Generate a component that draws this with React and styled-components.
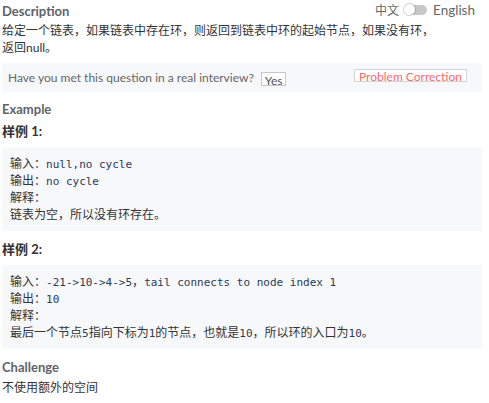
import React, { useState } from 'react';
import styled, { createGlobalStyle } from 'styled-components';

const GlobalStyle = createGlobalStyle`
  body {
    margin: 0;
    background: #fff;
    font-family: Lato, "Noto Sans CJK SC", sans-serif;
    color: #333;
  }
`;

const Page = styled.div`
  width: 480px;
  padding: 0 2px;
  display: flex;
  flex-direction: column;
`;

const HeaderRow = styled.div`
  height: 22px;
  display: flex;
  align-items: center;
  justify-content: space-between;
`;

const SectionTitle = styled.div`
  font-size: 13px;
  font-weight: 700;
  line-height: 20px;
  color: #5f6368;
  margin-top: ${props => props.gap || 0}px;
`;

const LangToggle = styled.div`
  display: flex;
  align-items: center;
  gap: 6px;
  font-size: 12px;
  color: #666;
  margin-right: 7px;
  margin-top: -3px;
`;

const Switch = styled.button`
  width: 22px;
  height: 10px;
  border: none;
  border-radius: 5px;
  background: #c8c8c8;
  padding: 0;
  position: relative;
  cursor: pointer;

  &::after {
    content: '';
    position: absolute;
    top: -1px;
    left: ${props => (props.on ? '11px' : '-1px')};
    width: 11px;
    height: 11px;
    border-radius: 50%;
    background: #fff;
    box-shadow: 0 0 1px 1px rgba(0, 0, 0, 0.2);
  }
`;

const English = styled.span`
  font-size: 13.5px;
`;

const Paragraph = styled.p`
  margin: 0;
  max-width: 440px;
  font-size: 12px;
  line-height: 17px;
  color: #333;
`;

const InterviewBar = styled.div`
  margin-top: 7px;
  height: 29px;
  background: #f7f8fa;
  display: flex;
  align-items: center;
  padding: 0 6px;
  font-size: 12px;
  color: #666;
`;

const YesButton = styled.button`
  margin-left: 7px;
  margin-top: 2px;
  height: 14px;
  padding: 0 3px;
  border: 1px solid #c9c9c9;
  background: #fff;
  font-family: inherit;
  font-size: 12px;
  line-height: 16px;
  color: #555;
  overflow: visible;
`;

const CorrectionButton = styled.button`
  margin-left: auto;
  margin-right: 9px;
  margin-top: -4px;
  height: 13px;
  padding: 0 4px;
  border: 1px solid #d6d6d6;
  background: #fff;
  font-family: inherit;
  font-size: 12px;
  line-height: 14px;
  color: #f56c6c;
  overflow: visible;
`;

const SampleTitle = styled.div`
  margin-top: ${props => props.gap}px;
  font-size: 13px;
  font-weight: 700;
  line-height: 20px;
  color: #333;
`;

const CodeBox = styled.div`
  margin-top: 6px;
  background: #f7f8fa;
  padding: 8px 8px;
  font-size: 12px;
  line-height: 17px;
  color: #333;
`;

const CodeLine = styled.div`
  white-space: pre;
  height: 17px;
`;

const Mono = styled.span`
  font-family: "DejaVu Sans Mono", "Liberation Mono", monospace;
  font-size: 11px;
  color: #2b3a55;
`;

const ChallengeText = styled.div`
  font-size: 12px;
  line-height: 20px;
  color: #333;
  margin-top: 1px;
`;

export default function App() {
  const [english, setEnglish] = useState(false);

  return (
    <Page>
      <GlobalStyle />
      <HeaderRow>
        <SectionTitle>Description</SectionTitle>
        <LangToggle>
          <span>中文</span>
          <Switch on={english ? 1 : 0} onClick={() => setEnglish(!english)} />
          <English>English</English>
        </LangToggle>
      </HeaderRow>
      <Paragraph>
        给定一个链表，如果链表中存在环，则返回到链表中环的起始节点，如果没有环，返回null。
      </Paragraph>

      <InterviewBar>
        Have you met this question in a real interview?
        <YesButton>Yes</YesButton>
        <CorrectionButton>Problem Correction</CorrectionButton>
      </InterviewBar>

      <SectionTitle gap={7}>Example</SectionTitle>
      <SampleTitle gap={2}>样例 1:</SampleTitle>
      <CodeBox>
        <CodeLine>输入：<Mono>null,no cycle</Mono></CodeLine>
        <CodeLine>输出：<Mono>no cycle</Mono></CodeLine>
        <CodeLine>解释：</CodeLine>
        <CodeLine>链表为空，所以没有环存在。</CodeLine>
      </CodeBox>

      <SampleTitle gap={8}>样例 2:</SampleTitle>
      <CodeBox>
        <CodeLine>输入：<Mono>-21-&gt;10-&gt;4-&gt;5</Mono>，<Mono>tail connects to node index 1</Mono></CodeLine>
        <CodeLine>输出：<Mono>10</Mono></CodeLine>
        <CodeLine>解释：</CodeLine>
        <CodeLine>
          最后一个节点<Mono>5</Mono>指向下标为<Mono>1</Mono>的节点，也就是<Mono>10</Mono>，所以环的入口为<Mono>10</Mono>。
        </CodeLine>
      </CodeBox>

      <SectionTitle gap={8}>Challenge</SectionTitle>
      <ChallengeText>不使用额外的空间</ChallengeText>
    </Page>
  );
}
